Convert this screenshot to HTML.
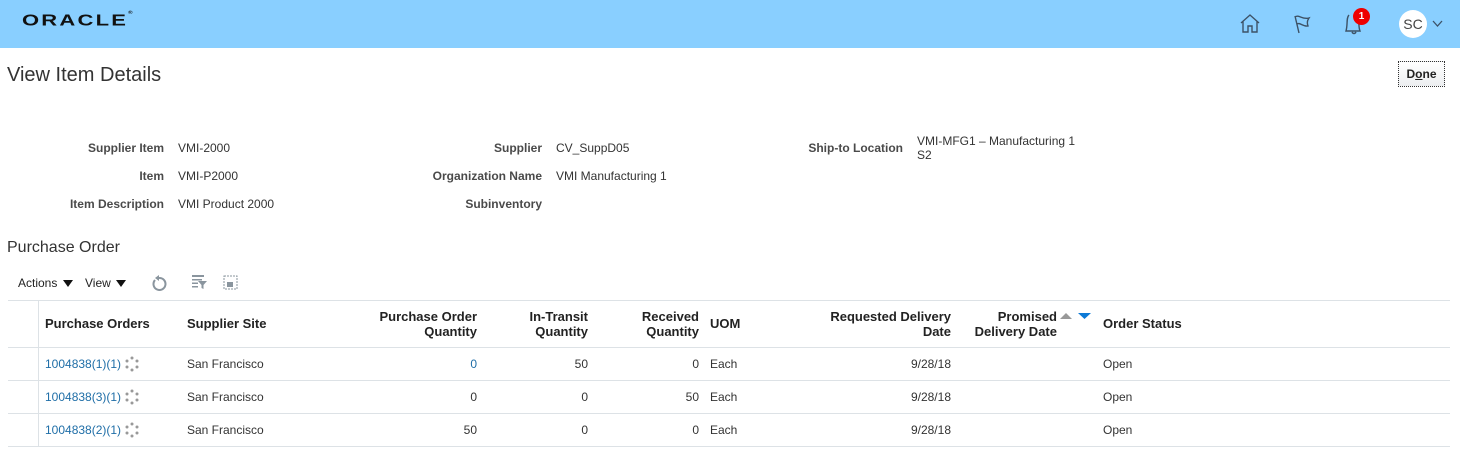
<!DOCTYPE html>
<html><head><meta charset="utf-8"><style>
*{margin:0;padding:0;box-sizing:border-box}
body{width:1460px;height:466px;background:#fff;font-family:"Liberation Sans",Arial,sans-serif;color:#333;position:relative;overflow:hidden}
.a{position:absolute;white-space:nowrap}
.hdr{position:absolute;left:0;top:0;width:1460px;height:48px;background:#89cfff}
.lbl{font-size:12px;font-weight:bold;color:#4a4a4a;text-align:right}
.val{font-size:12px;color:#333}
.th{font-size:13px;font-weight:bold;color:#222;line-height:15px}
.td{font-size:12px;color:#333}
.r{text-align:right}
.lnk{color:#1f6ea7}
.hl{position:absolute;left:8px;width:1442px;height:1px;background:#dde2e6}
</style></head><body>
<div class="hdr"></div>
<div class="a" style="left:22px;top:11px;font-size:22px;font-weight:bold;letter-spacing:2.2px;color:#111;transform:scaleY(0.72);transform-origin:left top">ORACLE<span style="font-size:6px;vertical-align:top;letter-spacing:0">®</span></div>
<svg class="a" style="left:1238px;top:12px" width="24" height="24" viewBox="0 0 24 24" fill="none" stroke="#3d5266" stroke-width="1.4"><path d="M3 11 L12 3 L21 11 M5 9.5 V20 H10 V14 H14 V20 H19 V9.5"/></svg>
<svg class="a" style="left:1290px;top:12px" width="24" height="24" viewBox="0 0 24 24" fill="none" stroke="#3d5266" stroke-width="1.4"><path d="M5 4 L9 21 M5 5 C9 2 12 8 19 6 C17 9 17 11 18 14 C13 15 10 10 7 12"/></svg>
<svg class="a" style="left:1343px;top:12px" width="24" height="24" viewBox="0 0 24 24" fill="none" stroke="#3d5266" stroke-width="1.4"><path d="M6 3 C3 6 5 12 3 19 L17 19 C15 14 17 9 14 5 M9 20 C10 22 12 22 13 20"/></svg>
<div class="a" style="left:1353px;top:8px;width:17px;height:17px;border-radius:50%;background:#e00;color:#fff;font-size:10px;font-weight:bold;text-align:center;line-height:17px">1</div>
<div class="a" style="left:1399px;top:10px;width:28px;height:28px;border-radius:50%;background:#fff;color:#444;font-size:14px;text-align:center;line-height:28px">SC</div>
<svg class="a" style="left:1432px;top:20px" width="11" height="8" viewBox="0 0 11 8" fill="none" stroke="#3d5266" stroke-width="1.3"><path d="M1 1 L5.5 6 L10 1"/></svg>

<div class="a" style="left:7px;top:64px;font-size:20px;color:#333">View Item Details</div>
<div class="a" style="left:1398px;top:61px;width:47px;height:26px;border:1px dotted #333;background:linear-gradient(#fff,#eceef0);font-size:12px;font-weight:bold;text-align:center;line-height:24px;color:#222">D<u>o</u>ne</div>

<div class="a lbl" style="right:1296px;top:141px">Supplier Item</div><div class="a val" style="left:178px;top:141px">VMI-2000</div>
<div class="a lbl" style="right:1296px;top:169px">Item</div><div class="a val" style="left:178px;top:169px">VMI-P2000</div>
<div class="a lbl" style="right:1296px;top:197px">Item Description</div><div class="a val" style="left:178px;top:197px">VMI Product 2000</div>
<div class="a lbl" style="right:918px;top:141px">Supplier</div><div class="a val" style="left:556px;top:141px">CV_SuppD05</div>
<div class="a lbl" style="right:918px;top:169px">Organization Name</div><div class="a val" style="left:556px;top:169px">VMI Manufacturing 1</div>
<div class="a lbl" style="right:918px;top:197px">Subinventory</div>
<div class="a lbl" style="right:557px;top:141px">Ship-to Location</div><div class="a val" style="left:917px;top:134px;line-height:14px">VMI-MFG1 – Manufacturing 1<br>S2</div>

<div class="a" style="left:7px;top:239px;font-size:16px;color:#333">Purchase Order</div>
<div class="a" style="left:18px;top:276px;font-size:12px;color:#222">Actions</div>
<svg class="a" style="left:63px;top:280px" width="10" height="7"><path d="M0 0H10L5 7Z" fill="#111"/></svg>
<div class="a" style="left:85px;top:276px;font-size:12px;color:#222">View</div>
<svg class="a" style="left:116px;top:280px" width="10" height="7"><path d="M0 0H10L5 7Z" fill="#111"/></svg>
<svg class="a" style="left:151px;top:275px" width="16" height="16" viewBox="0 0 16 16" fill="none" stroke="#8a959e" stroke-width="2"><path d="M4 5 A6 6 0 1 0 8 3"/><path d="M8 0 L4 3 L8 6Z" fill="#8a959e" stroke="none"/></svg>
<svg class="a" style="left:191px;top:274px" width="17" height="16" viewBox="0 0 17 16" fill="#8a959e"><rect x="1" y="1" width="12" height="2"/><rect x="1" y="5" width="10" height="1.5"/><rect x="1" y="8.5" width="6" height="1.5"/><rect x="1" y="12" width="6" height="1.5"/><path d="M7 7 H16 L12.5 11 V15 L10.5 14 V11 Z"/></svg>
<svg class="a" style="left:223px;top:274px" width="16" height="16" viewBox="0 0 16 16" fill="none" stroke="#8a959e" stroke-dasharray="2 1"><rect x="1" y="2" width="13" height="13"/><rect x="4" y="8" width="6" height="5" fill="#8a959e" stroke="none"/></svg>

<div class="hl" style="top:300px"></div>
<div class="hl" style="top:347px"></div>
<div class="hl" style="top:380px"></div>
<div class="hl" style="top:413px"></div>
<div class="hl" style="top:446px"></div>
<div class="a" style="left:38px;top:301px;width:1px;height:146px;background:#dde2e6"></div>

<div class="a th" style="left:45px;top:316px">Purchase Orders</div>
<div class="a th" style="left:187px;top:316px">Supplier Site</div>
<div class="a th r" style="right:983px;top:309px">Purchase Order<br>Quantity</div>
<div class="a th r" style="right:872px;top:309px">In-Transit<br>Quantity</div>
<div class="a th r" style="right:761px;top:309px">Received<br>Quantity</div>
<div class="a th" style="left:710px;top:316px">UOM</div>
<div class="a th r" style="right:509px;top:309px">Requested Delivery<br>Date</div>
<div class="a th r" style="right:403px;top:309px">Promised<br>Delivery Date</div>
<svg class="a" style="left:1060px;top:311px" width="32" height="10" viewBox="0 0 32 10"><path d="M0 8 L6 2 L12 8Z" fill="#999"/><path d="M18 2 L31 2 L24.5 8Z" fill="#0d7ad6"/></svg>
<div class="a th" style="left:1103px;top:316px">Order Status</div>

<div class="a td lnk" style="left:45px;top:357px">1004838(1)(1)</div>
<div class="a td lnk" style="left:45px;top:390px">1004838(3)(1)</div>
<div class="a td lnk" style="left:45px;top:423px">1004838(2)(1)</div>
<svg class="a" style="left:124px;top:356px" width="16" height="16" viewBox="0 0 16 16" fill="#999"><circle cx="8" cy="2" r="1.5"/><circle cx="13" cy="5" r="1.5"/><circle cx="13" cy="11" r="1.5"/><circle cx="8" cy="14" r="1.5"/><circle cx="3" cy="11" r="1.5"/><circle cx="3" cy="5" r="1.5"/></svg>
<svg class="a" style="left:124px;top:389px" width="16" height="16" viewBox="0 0 16 16" fill="#999"><circle cx="8" cy="2" r="1.5"/><circle cx="13" cy="5" r="1.5"/><circle cx="13" cy="11" r="1.5"/><circle cx="8" cy="14" r="1.5"/><circle cx="3" cy="11" r="1.5"/><circle cx="3" cy="5" r="1.5"/></svg>
<svg class="a" style="left:124px;top:422px" width="16" height="16" viewBox="0 0 16 16" fill="#999"><circle cx="8" cy="2" r="1.5"/><circle cx="13" cy="5" r="1.5"/><circle cx="13" cy="11" r="1.5"/><circle cx="8" cy="14" r="1.5"/><circle cx="3" cy="11" r="1.5"/><circle cx="3" cy="5" r="1.5"/></svg>

<div class="a td" style="left:187px;top:357px">San Francisco</div>
<div class="a td" style="left:187px;top:390px">San Francisco</div>
<div class="a td" style="left:187px;top:423px">San Francisco</div>

<div class="a td r lnk" style="right:983px;top:357px">0</div>
<div class="a td r" style="right:983px;top:390px">0</div>
<div class="a td r" style="right:983px;top:423px">50</div>
<div class="a td r" style="right:872px;top:357px">50</div>
<div class="a td r" style="right:872px;top:390px">0</div>
<div class="a td r" style="right:872px;top:423px">0</div>
<div class="a td r" style="right:761px;top:357px">0</div>
<div class="a td r" style="right:761px;top:390px">50</div>
<div class="a td r" style="right:761px;top:423px">0</div>
<div class="a td" style="left:710px;top:357px">Each</div>
<div class="a td" style="left:710px;top:390px">Each</div>
<div class="a td" style="left:710px;top:423px">Each</div>
<div class="a td r" style="right:509px;top:357px">9/28/18</div>
<div class="a td r" style="right:509px;top:390px">9/28/18</div>
<div class="a td r" style="right:509px;top:423px">9/28/18</div>
<div class="a td" style="left:1103px;top:357px">Open</div>
<div class="a td" style="left:1103px;top:390px">Open</div>
<div class="a td" style="left:1103px;top:423px">Open</div>
</body></html>
